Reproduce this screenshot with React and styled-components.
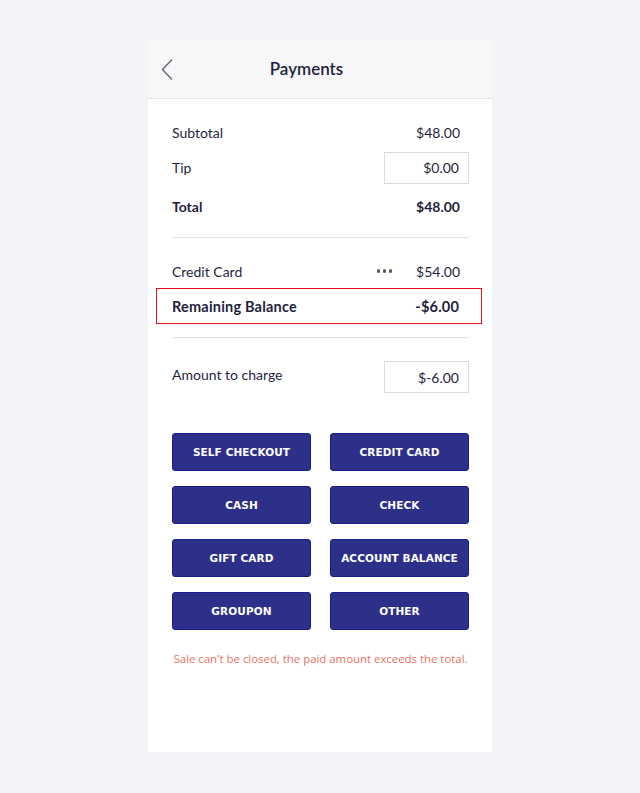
import styled, { createGlobalStyle } from "styled-components";

const GlobalStyle = createGlobalStyle`
  html, body {
    margin: 0;
    padding: 0;
    background: #f3f3f7;
  }
  body {
    font-family: Lato, "Noto Sans", sans-serif;
    color: #1f1f3d;
  }
`;

const Page = styled.div`
  display: flex;
  justify-content: center;
  padding: 40px 0 41px;
`;

const Card = styled.div`
  width: 344px;
  height: 712px;
  background: #ffffff;
  display: flex;
  flex-direction: column;
`;

const Header = styled.header`
  height: 58px;
  background: #f7f7f7;
  border-bottom: 1px solid #e6e6e8;
  display: grid;
  grid-template-columns: 40px 1fr 67px;
  align-items: center;
`;

const BackButton = styled.button`
  border: 0;
  background: transparent;
  padding: 0 0 0 13px;
  display: flex;
  align-items: center;
  cursor: pointer;
`;

const Title = styled.h1`
  margin: 0 0 2px;
  text-align: center;
  font-size: 17px;
  font-weight: 600;
  color: #1f1f3d;
`;

const Body = styled.div`
  padding: 16px 23px 0 24px;
  display: flex;
  flex-direction: column;
`;

const Row = styled.div`
  display: flex;
  align-items: center;
  justify-content: space-between;
  height: ${(p) => p.h || 35}px;
  font-size: 14px;
  font-weight: ${(p) => (p.bold ? 700 : 400)};
`;

const Value = styled.span`
  padding-right: 9px;
`;

const Highlight = styled.div`
  margin: 0 -13px 0 -16px;
  padding: 0 22px 0 15px;
  border: 1px solid #e4121b;
  height: 34px;
  display: flex;
  align-items: center;
  justify-content: space-between;
  font-size: 14.5px;
  font-weight: 700;
  letter-spacing: 0.2px;
`;

const Right = styled.div`
  display: flex;
  align-items: center;
  gap: 24px;
`;

const Dots = styled.span`
  display: flex;
  gap: 2.5px;
  span {
    width: 3.5px;
    height: 3.5px;
    border-radius: 50%;
    background: #55556a;
  }
`;

const AmountBox = styled.div`
  width: 85px;
  height: 32px;
  box-sizing: border-box;
  border: 1px solid #dcdcdf;
  display: flex;
  align-items: center;
  justify-content: flex-end;
  padding-right: 9px;
`;

const Divider = styled.hr`
  border: 0;
  border-top: 1px solid #e3e3e6;
  margin: ${(p) => p.m || "0"};
`;

const ButtonGrid = styled.div`
  display: grid;
  grid-template-columns: 139px 139px;
  column-gap: 19px;
  row-gap: 15px;
  margin-top: 39px;
`;

const PayButton = styled.button`
  height: 38px;
  background: #2d3088;
  border: 1px solid #1a1d8c;
  border-radius: 3px;
  color: #ffffff;
  font-family: "DejaVu Sans", Verdana, sans-serif;
  font-weight: 700;
  font-size: 10.5px;
  letter-spacing: 0.1px;
  text-transform: uppercase;
  cursor: pointer;
`;

const ErrorText = styled.p`
  margin: 21px 0 0;
  text-align: center;
  font-family: "Open Sans", sans-serif;
  font-size: 11.4px;
  color: #e8735f;
`;

const methods = [
  "Self Checkout",
  "Credit Card",
  "Cash",
  "Check",
  "Gift Card",
  "Account Balance",
  "Groupon",
  "Other",
];

export default function App() {
  return (
    <>
      <GlobalStyle />
      <Page>
        <Card>
          <Header>
            <BackButton aria-label="Back">
              <svg width="12" height="21" viewBox="0 0 12 21" fill="none">
                <path d="M10.5 1 L1.5 10.5 L10.5 20" stroke="#6b6b80" strokeWidth="1.5" strokeLinecap="round" strokeLinejoin="round" />
              </svg>
            </BackButton>
            <Title>Payments</Title>
            <span />
          </Header>
          <Body>
            <Row>
              <span>Subtotal</span>
              <Value>$48.00</Value>
            </Row>
            <Row>
              <span>Tip</span>
              <AmountBox>$0.00</AmountBox>
            </Row>
            <Row h={42} bold>
              <span>Total</span>
              <Value>$48.00</Value>
            </Row>
            <Divider m="10px 0 16px" />
            <Row h={34}>
              <span>Credit Card</span>
              <Right>
                <Dots>
                  <span />
                  <span />
                  <span />
                </Dots>
                <Value>$54.00</Value>
              </Right>
            </Row>
            <Highlight>
              <span>Remaining Balance</span>
              <span>-$6.00</span>
            </Highlight>
            <Divider m="13px 0 22px" />
            <Row h={34}>
              <span style={{ marginTop: -5 }}>Amount to charge</span>
              <AmountBox>$-6.00</AmountBox>
            </Row>
            <ButtonGrid>
              {methods.map((m) => (
                <PayButton key={m}>{m}</PayButton>
              ))}
            </ButtonGrid>
            <ErrorText>Sale can't be closed, the paid amount exceeds the total.</ErrorText>
          </Body>
        </Card>
      </Page>
    </>
  );
}
